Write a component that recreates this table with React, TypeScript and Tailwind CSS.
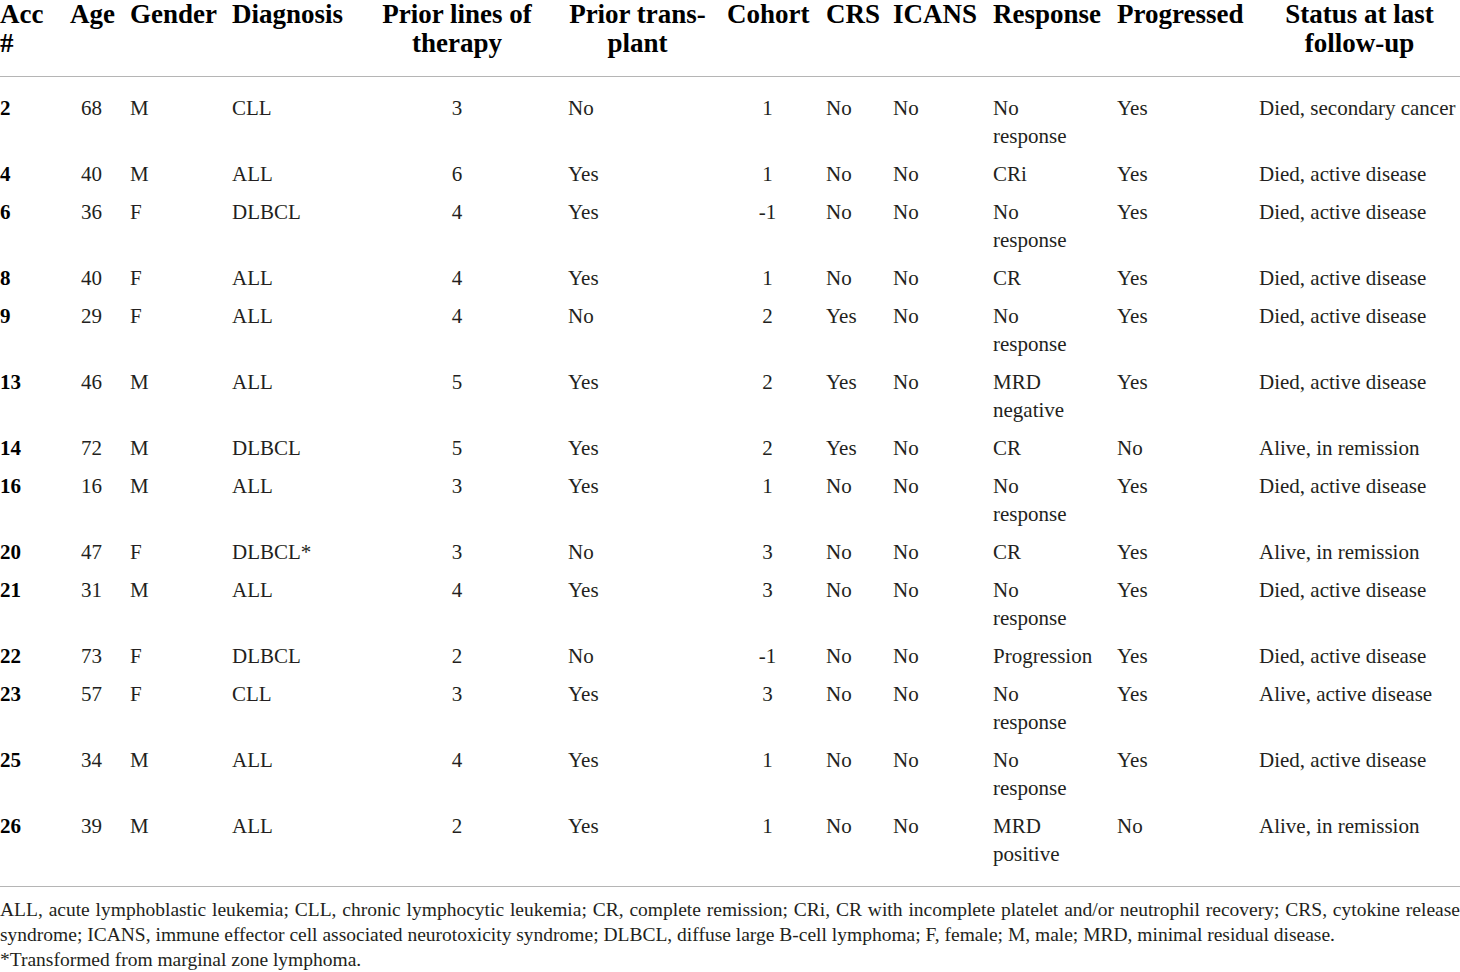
import React from "react";

type Row = {
  acc: string;
  age: string;
  gender: string;
  diagnosis: string;
  lines: string;
  transplant: string;
  cohort: string;
  crs: string;
  icans: string;
  response: string[];
  progressed: string;
  status: string;
};

const rows: Row[] = [
  { acc: "2", age: "68", gender: "M", diagnosis: "CLL", lines: "3", transplant: "No", cohort: "1", crs: "No", icans: "No", response: ["No", "response"], progressed: "Yes", status: "Died, secondary cancer" },
  { acc: "4", age: "40", gender: "M", diagnosis: "ALL", lines: "6", transplant: "Yes", cohort: "1", crs: "No", icans: "No", response: ["CRi"], progressed: "Yes", status: "Died, active disease" },
  { acc: "6", age: "36", gender: "F", diagnosis: "DLBCL", lines: "4", transplant: "Yes", cohort: "-1", crs: "No", icans: "No", response: ["No", "response"], progressed: "Yes", status: "Died, active disease" },
  { acc: "8", age: "40", gender: "F", diagnosis: "ALL", lines: "4", transplant: "Yes", cohort: "1", crs: "No", icans: "No", response: ["CR"], progressed: "Yes", status: "Died, active disease" },
  { acc: "9", age: "29", gender: "F", diagnosis: "ALL", lines: "4", transplant: "No", cohort: "2", crs: "Yes", icans: "No", response: ["No", "response"], progressed: "Yes", status: "Died, active disease" },
  { acc: "13", age: "46", gender: "M", diagnosis: "ALL", lines: "5", transplant: "Yes", cohort: "2", crs: "Yes", icans: "No", response: ["MRD", "negative"], progressed: "Yes", status: "Died, active disease" },
  { acc: "14", age: "72", gender: "M", diagnosis: "DLBCL", lines: "5", transplant: "Yes", cohort: "2", crs: "Yes", icans: "No", response: ["CR"], progressed: "No", status: "Alive, in remission" },
  { acc: "16", age: "16", gender: "M", diagnosis: "ALL", lines: "3", transplant: "Yes", cohort: "1", crs: "No", icans: "No", response: ["No", "response"], progressed: "Yes", status: "Died, active disease" },
  { acc: "20", age: "47", gender: "F", diagnosis: "DLBCL*", lines: "3", transplant: "No", cohort: "3", crs: "No", icans: "No", response: ["CR"], progressed: "Yes", status: "Alive, in remission" },
  { acc: "21", age: "31", gender: "M", diagnosis: "ALL", lines: "4", transplant: "Yes", cohort: "3", crs: "No", icans: "No", response: ["No", "response"], progressed: "Yes", status: "Died, active disease" },
  { acc: "22", age: "73", gender: "F", diagnosis: "DLBCL", lines: "2", transplant: "No", cohort: "-1", crs: "No", icans: "No", response: ["Progression"], progressed: "Yes", status: "Died, active disease" },
  { acc: "23", age: "57", gender: "F", diagnosis: "CLL", lines: "3", transplant: "Yes", cohort: "3", crs: "No", icans: "No", response: ["No", "response"], progressed: "Yes", status: "Alive, active disease" },
  { acc: "25", age: "34", gender: "M", diagnosis: "ALL", lines: "4", transplant: "Yes", cohort: "1", crs: "No", icans: "No", response: ["No", "response"], progressed: "Yes", status: "Died, active disease" },
  { acc: "26", age: "39", gender: "M", diagnosis: "ALL", lines: "2", transplant: "Yes", cohort: "1", crs: "No", icans: "No", response: ["MRD", "positive"], progressed: "No", status: "Alive, in remission" },
];

// column tracks: start of each column's text zone, padding fills the gutter
const cols =
  "grid grid-cols-[70px_60px_102px_149px_187px_159px_99px_67px_100px_124px_142px_201px]";

function Header() {
  return (
    <div
      className={`${cols} pb-[18px] text-[27px] leading-[29px] font-bold text-black whitespace-nowrap border-b border-[#b5b5b5]`}
    >
      <div className="pr-[18px]">
        Acc
        <br />#
      </div>
      <div className="pr-[17px] text-center">Age</div>
      <div className="pr-[18px]">Gender</div>
      <div className="pr-[18px]">Diagnosis</div>
      <div className="pr-[35px] text-center">
        Prior lines of
        <br />
        therapy
      </div>
      <div className="pr-[20px] text-center">
        Prior trans-
        <br />
        plant
      </div>
      <div className="pr-[18px] text-center">Cohort</div>
      <div className="pr-[17px]">CRS</div>
      <div className="pr-[18px]">ICANS</div>
      <div className="pr-[18px]">Response</div>
      <div className="pr-[19px]">Progressed</div>
      <div className="text-center">
        Status at last
        <br />
        follow-up
      </div>
    </div>
  );
}

function TableRow({ row }: { row: Row }) {
  return (
    <div className={`${cols} py-[5px] text-[21px] leading-[28px] whitespace-nowrap`}>
      <div className="pr-[18px] font-bold text-black">{row.acc}</div>
      <div className="pr-[17px] text-center">{row.age}</div>
      <div className="pr-[18px]">{row.gender}</div>
      <div className="pr-[18px]">{row.diagnosis}</div>
      <div className="pr-[35px] text-center">{row.lines}</div>
      <div className="pr-[20px]">{row.transplant}</div>
      <div className="pr-[18px] text-center">{row.cohort}</div>
      <div className="pr-[17px]">{row.crs}</div>
      <div className="pr-[18px]">{row.icans}</div>
      <div className="pr-[18px]">
        {row.response.map((line) => (
          <div key={line}>{line}</div>
        ))}
      </div>
      <div className="pr-[19px]">{row.progressed}</div>
      <div>{row.status}</div>
    </div>
  );
}

export default function App() {
  return (
    <div className="w-[1460px] h-[972px] overflow-hidden bg-white text-[#231f20] font-['Liberation_Serif',serif]">
      <Header />
      <div className="pt-[12px] pb-[13px] border-b border-[#b5b5b5]">
        {rows.map((row) => (
          <TableRow key={row.acc} row={row} />
        ))}
      </div>
      <div className="pt-[10px] text-[19.5px] leading-[25px]">
        <div className="text-justify [text-align-last:justify]">
          ALL, acute lymphoblastic leukemia; CLL, chronic lymphocytic leukemia; CR, complete remission; CRi, CR with
          incomplete platelet and/or neutrophil recovery; CRS, cytokine release
        </div>
        <div>
          syndrome; ICANS, immune effector cell associated neurotoxicity syndrome; DLBCL, diffuse large B-cell lymphoma; F,
          female; M, male; MRD, minimal residual disease.
        </div>
        <div>*Transformed from marginal zone lymphoma.</div>
      </div>
    </div>
  );
}
